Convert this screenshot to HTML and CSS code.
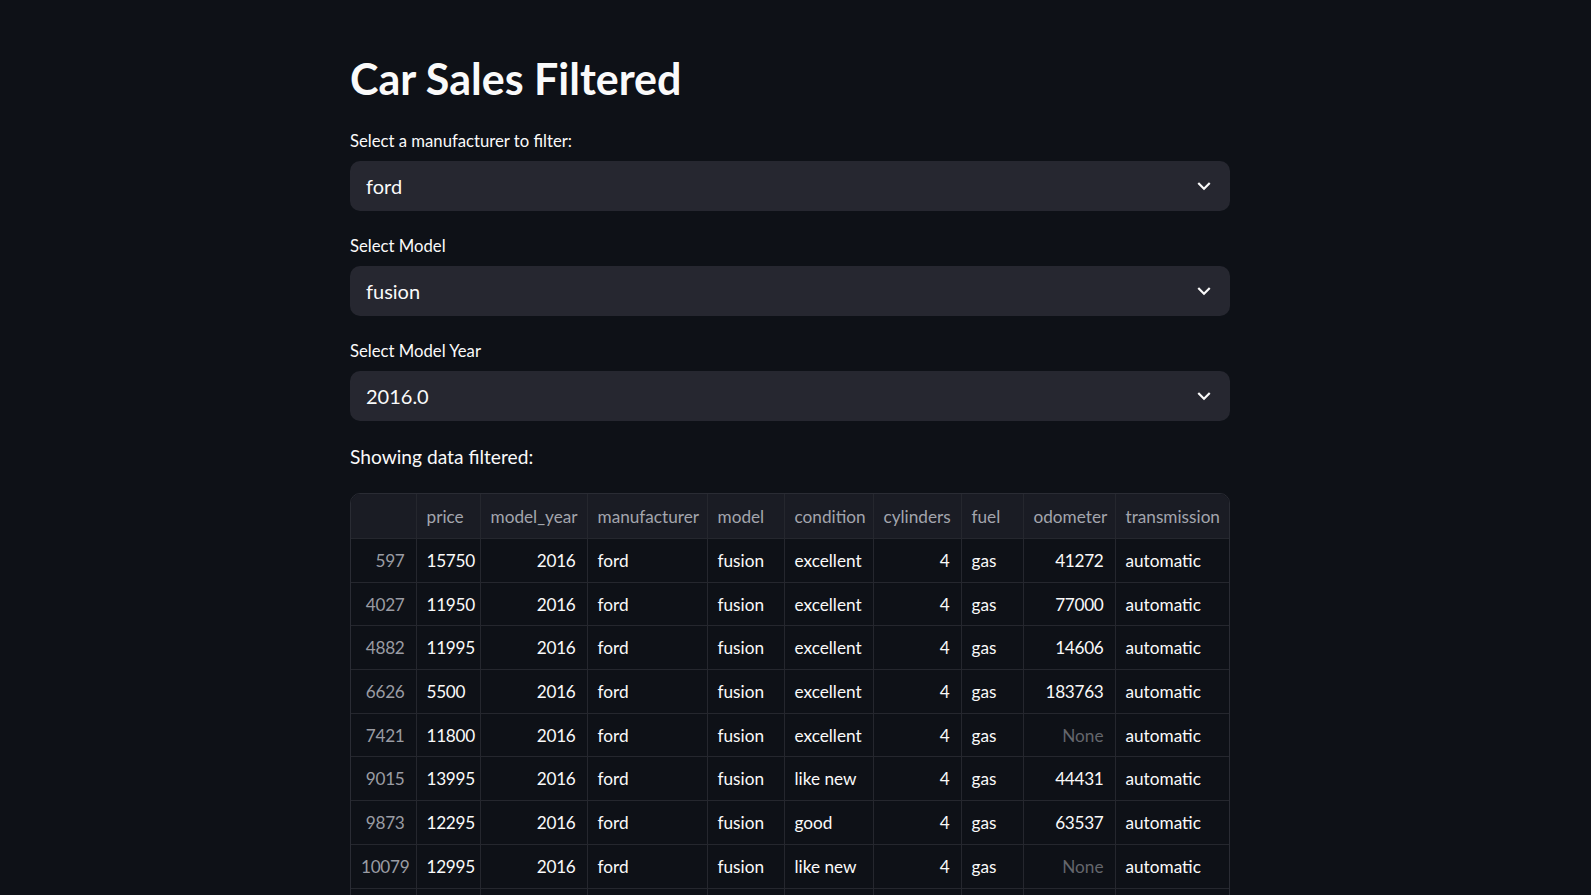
FILE: index.html
```html
<!DOCTYPE html>
<html lang="en">
<head>
<meta charset="utf-8">
<title>Car Sales Filtered</title>
<link rel="stylesheet" href="styles.css">
</head>
<body>
<div class="app">
  <main class="block">
    <h1 class="title">Car Sales Filtered</h1>

    <div class="field">
      <label class="label">Select a manufacturer to filter:</label>
      <div class="select">
        <span class="value">ford</span>
        <svg class="chev" viewBox="0 0 24 24" width="26" height="26"><path d="M16.59 8.59L12 13.17 7.41 8.59 6 10l6 6 6-6z"/></svg>
      </div>
    </div>

    <div class="field">
      <label class="label">Select Model</label>
      <div class="select">
        <span class="value">fusion</span>
        <svg class="chev" viewBox="0 0 24 24" width="26" height="26"><path d="M16.59 8.59L12 13.17 7.41 8.59 6 10l6 6 6-6z"/></svg>
      </div>
    </div>

    <div class="field">
      <label class="label">Select Model Year</label>
      <div class="select">
        <span class="value">2016.0</span>
        <svg class="chev" viewBox="0 0 24 24" width="26" height="26"><path d="M16.59 8.59L12 13.17 7.41 8.59 6 10l6 6 6-6z"/></svg>
      </div>
    </div>

    <p class="text">Showing data filtered:</p>

    <div class="grid">
      <table>
        <colgroup>
          <col class="c-idx"><col class="c-price"><col class="c-year"><col class="c-man"><col class="c-model"><col class="c-cond"><col class="c-cyl"><col class="c-fuel"><col class="c-odo"><col class="c-trans">
        </colgroup>
        <thead>
          <tr><th></th><th>price</th><th>model_year</th><th>manufacturer</th><th>model</th><th>condition</th><th>cylinders</th><th>fuel</th><th>odometer</th><th>transmission</th></tr>
        </thead>
        <tbody>
          <tr><td class="idx">597</td><td class="dig">15750</td><td class="num">2016</td><td>ford</td><td>fusion</td><td>excellent</td><td class="num">4</td><td>gas</td><td class="num">41272</td><td>automatic</td></tr>
          <tr><td class="idx">4027</td><td class="dig">11950</td><td class="num">2016</td><td>ford</td><td>fusion</td><td>excellent</td><td class="num">4</td><td>gas</td><td class="num">77000</td><td>automatic</td></tr>
          <tr><td class="idx">4882</td><td class="dig">11995</td><td class="num">2016</td><td>ford</td><td>fusion</td><td>excellent</td><td class="num">4</td><td>gas</td><td class="num">14606</td><td>automatic</td></tr>
          <tr><td class="idx">6626</td><td class="dig">5500</td><td class="num">2016</td><td>ford</td><td>fusion</td><td>excellent</td><td class="num">4</td><td>gas</td><td class="num">183763</td><td>automatic</td></tr>
          <tr><td class="idx">7421</td><td class="dig">11800</td><td class="num">2016</td><td>ford</td><td>fusion</td><td>excellent</td><td class="num">4</td><td>gas</td><td class="num none">None</td><td>automatic</td></tr>
          <tr><td class="idx">9015</td><td class="dig">13995</td><td class="num">2016</td><td>ford</td><td>fusion</td><td>like new</td><td class="num">4</td><td>gas</td><td class="num">44431</td><td>automatic</td></tr>
          <tr><td class="idx">9873</td><td class="dig">12295</td><td class="num">2016</td><td>ford</td><td>fusion</td><td>good</td><td class="num">4</td><td>gas</td><td class="num">63537</td><td>automatic</td></tr>
          <tr><td class="idx">10079</td><td class="dig">12995</td><td class="num">2016</td><td>ford</td><td>fusion</td><td>like new</td><td class="num">4</td><td>gas</td><td class="num none">None</td><td>automatic</td></tr>
          <tr class="tail"><td></td><td></td><td></td><td></td><td></td><td></td><td></td><td></td><td></td><td></td></tr>
        </tbody>
      </table>
    </div>
  </main>
</div>
</body>
</html>
```
FILE: styles.css
```css
html, body {
  margin: 0;
  padding: 0;
  height: 895px;
  overflow: hidden;
  background: #0e1117;
}

body {
  font-family: Lato, "Noto Sans", sans-serif;
  color: #fafafa;
}

.app {
  padding-right: 11px;
}

.block {
  width: 880px;
  margin: 0 auto;
  display: flex;
  flex-direction: column;
}

.title {
  margin: 0;
  padding-top: 53px;
  font-size: 43px;
  font-weight: 700;
  line-height: 52px;
  margin-bottom: 21px;
}

.field {
  display: flex;
  flex-direction: column;
  margin-bottom: 20px;
}

.label {
  height: 30px;
  display: flex;
  align-items: center;
  font-size: 16.7px;
  margin-bottom: 5px;
}

.select {
  height: 50px;
  background: #262730;
  border-radius: 10px;
  display: flex;
  align-items: center;
  justify-content: space-between;
  padding: 0 13px 0 16px;
}

.value {
  font-size: 20px;
}

.chev {
  fill: #fafafa;
}

.text {
  margin: 0 0 20px;
  font-size: 19.2px;
  line-height: 32px;
}

.grid {
  border: 1px solid #2a2c34;
  border-radius: 10px;
  overflow: hidden;
}

table {
  width: 100%;
  border-collapse: collapse;
  table-layout: fixed;
  font-size: 17.2px;
}

.c-idx { width: 65px; }
.c-price { width: 64px; }
.c-year { width: 107px; }
.c-man { width: 120px; }
.c-model { width: 77px; }
.c-cond { width: 89px; }
.c-cyl { width: 88px; }
.c-fuel { width: 62px; }
.c-odo { width: 92px; }
.c-trans { width: auto; }

th, td {
  padding: 0 10px;
  text-align: left;
  white-space: nowrap;
  overflow: hidden;
  border-right: 1px solid #25272e;
  border-bottom: 1px solid #25272e;
}

th:last-child, td:last-child {
  border-right: none;
}

th {
  height: 44px;
  background: #1a1c24;
  color: #a3a5ad;
  font-weight: 400;
}

td {
  height: 42.7px;
  background: #0e1117;
  color: #fafafa;
}

td.num, td.idx, td.dig {
  letter-spacing: -0.3px;
}

td.num, td.idx {
  text-align: right;
  padding-right: 11px;
}

td.idx {
  color: #9a9ca3;
}

td.none {
  color: #64666c;
  letter-spacing: 0;
}
```
